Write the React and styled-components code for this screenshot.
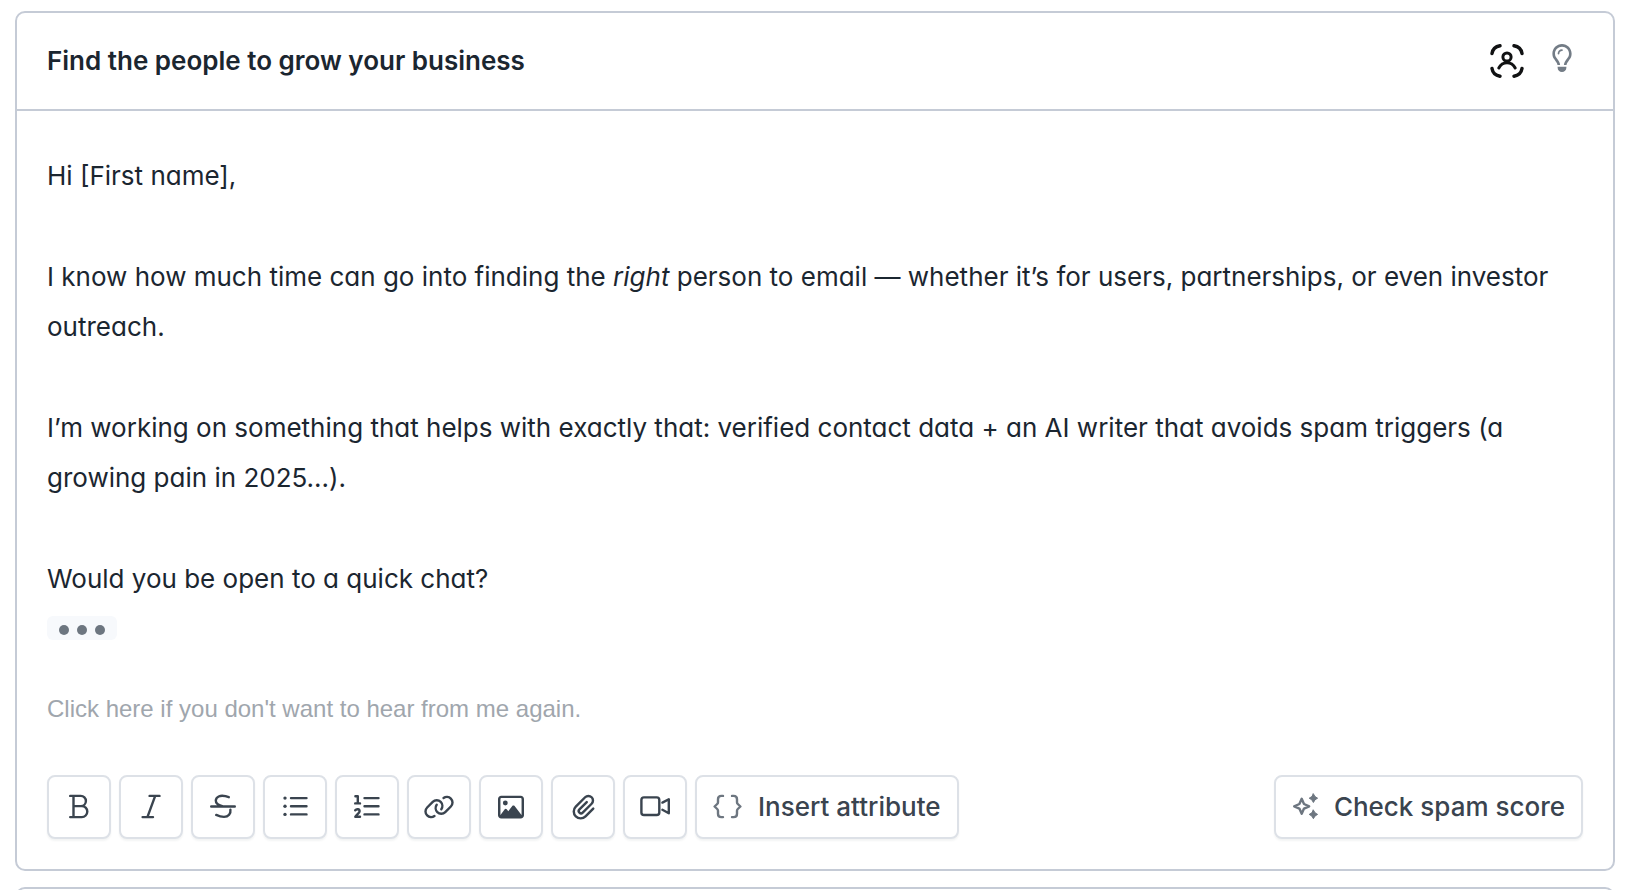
import React from "react";
import styled, { createGlobalStyle } from "styled-components";
import { FaRegImage, FaRegLightbulb } from "react-icons/fa6";

const GlobalStyle = createGlobalStyle`
  *, *::before, *::after { box-sizing: border-box; }
  body {
    margin: 0;
    background: #fff;
    color: #1b2630;
    font-family: Inter, "Liberation Sans", sans-serif;
    font-size: 26px;
  }
`;

const Page = styled.main`
  display: flex;
  flex-direction: column;
  gap: 16px;
  height: 100vh;
  overflow: hidden;
  padding: 11px 15px 0;
`;

const Card = styled.section`
  flex: none;
  border: 2px solid #c5cbd6;
  border-radius: 10px;
  background: #fff;
  min-height: 64px;
`;

const CardHeader = styled.header`
  display: flex;
  align-items: center;
  justify-content: space-between;
  height: 98px;
  padding: 0 37px 0 30px;
  border-bottom: 2px solid #c5cbd6;
`;

const Subject = styled.h1`
  margin: 0;
  font-size: 26px;
  font-weight: 600;
  line-height: 32px;
`;

const HeaderActions = styled.div`
  display: flex;
  align-items: flex-start;
  gap: 24px;
`;

const PlainButton = styled.button`
  display: flex;
  padding: 0;
  border: 0;
  background: none;
  color: ${(p) => p.$color};
  cursor: pointer;
`;

const Message = styled.div`
  display: flex;
  flex-direction: column;
  align-items: flex-start;
  padding: 40px 30px 0;
`;

const Paragraphs = styled.div`
  display: flex;
  flex-direction: column;
  gap: 51px;
  font-feature-settings: "cv11";
  line-height: 50px;

  p { margin: 0; }
`;

const MoreButton = styled.button`
  display: flex;
  align-items: center;
  justify-content: center;
  gap: 8px;
  width: 70px;
  height: 24px;
  margin-top: 12px;
  padding: 4px 0 0;
  border: 0;
  border-radius: 6px;
  background: #f7f9fc;
  cursor: pointer;
`;

const Dot = styled.span`
  width: 10px;
  height: 10px;
  border-radius: 50%;
  background: #6d7680;
`;

const Unsubscribe = styled.a`
  margin-top: 54px;
  color: #a0a6ad;
  font-family: "Liberation Sans", Arial, sans-serif;
  font-size: 24px;
  line-height: 30px;
  text-decoration: none;
`;

const Toolbar = styled.div`
  display: flex;
  gap: 8px;
  padding: 51px 30px 30px;
`;

const ToolButton = styled.button`
  display: flex;
  align-items: center;
  justify-content: center;
  gap: 16px;
  height: 64px;
  min-width: 64px;
  padding: 0 ${(p) => (p.$labelled ? 16 : 0)}px;
  margin-left: ${(p) => (p.$end ? "auto" : 0)};
  border: 2px solid #dde1e7;
  border-radius: 8px;
  background: #fff;
  box-shadow: 0 2px 2px rgba(27, 37, 48, 0.05);
  color: #3a444f;
  font: 500 26px/32px Inter, "Liberation Sans", sans-serif;
  white-space: nowrap;
  cursor: pointer;

  svg { flex: none; color: ${(p) => (p.$labelled ? "#6d7680" : "#3a444f")}; }
`;

const Icon = ({ w = 32, h = 32, box, sw = 2.4, children }) => (
  <svg
    width={w}
    height={h}
    viewBox={box || `0 0 ${w} ${h}`}
    fill="none"
    stroke="currentColor"
    strokeWidth={sw}
    strokeLinecap="round"
    strokeLinejoin="round"
    aria-hidden="true"
  >
    {children}
  </svg>
);

const ScanUserIcon = () => (
  <Icon w={34} h={34} sw={3.4}>
    <path d="M2 9.5Q3 3 10 1.8M24 1.8Q31 3 32 9.5M32 24.5Q31 31 24 32.2M10 32.2Q3 31 2 24.5" />
    <g strokeWidth="3">
      <circle cx="17" cy="13" r="4.1" />
      <path d="M8.8 24Q11.5 18.8 17 18.8T25.2 24" />
    </g>
  </Icon>
);

const BoldIcon = () => (
  <Icon>
    <path d="M7.2 4.9H17.8a5.1 5.1 0 0 1 0 10.2H10.5M17.8 15.1H18.8a5.5 5.5 0 0 1 0 11H7.2M10.5 4.9V26.1" />
  </Icon>
);

const ItalicIcon = () => (
  <Icon>
    <path d="M14.6 4.9H24.5M7.6 26.1H18M20.2 4.9L12.4 26.1" />
  </Icon>
);

const StrikeIcon = () => (
  <Icon>
    <path d="M4.2 15.5H27.8M21.8 6.2L18.5 5.2C13 3.7 9 6 8.8 9.4C8.6 13 12 14.4 16 15.4M23.4 18.8C24 22.5 21.5 25.9 17 25.9C14 25.9 11.5 25 9.2 23.9" />
  </Icon>
);

const ListLines = ({ x }) => <path d={`M${x} 7.1H27.5M${x} 15.2H27.5M${x} 23.4H27.5`} />;

const BulletsIcon = () => (
  <Icon>
    <ListLines x={12} />
    <g fill="currentColor" stroke="none">
      <circle cx="6" cy="7.1" r="1.7" />
      <circle cx="6" cy="15.2" r="1.7" />
      <circle cx="6" cy="23.4" r="1.7" />
    </g>
  </Icon>
);

const NumbersIcon = () => (
  <Icon>
    <ListLines x={13.5} />
    <path d="M4.4 5.2H6.8V12.3M4.2 12.4H9M4.2 19.3C5.5 17.6 8.6 17.8 8.6 20.2C8.6 21.8 6.4 23 4.3 25.7H9" />
  </Icon>
);

const LinkHook = "M411 75c45-32 107-27 146 12c44 44 44 115 0 159L445 357c-44 44-115 44-159 0c-39-39-44-101-12-146";
const LinkIcon = () => (
  <Icon w={32} h={26} box="0 0 640 512" sw={48}>
    <path d={LinkHook} />
    <path d={LinkHook} transform="rotate(180 320 256)" />
  </Icon>
);

const PaperclipIcon = () => (
  <Icon w={23} h={26} box="0 0 448 512" sw={48}>
    <path d="M416 288L264 440c-53 53-139 53-192 0s-53-139 0-192L256 64c35-35 93-35 128 0s35 93 0 128L208 368c-18 18-46 18-64 0s-18-46 0-64L288 160" />
  </Icon>
);

const VideoIcon = () => (
  <Icon>
    <rect x="2.4" y="6.4" width="17.9" height="17.6" rx="2.6" />
    <path d="M23.4 11.6L29.8 8.2V22.2L23.4 18.8" />
  </Icon>
);

const BracesIcon = () => (
  <Icon w={29}>
    <path d="M10 4.9H8.4Q5 4.9 5 8.3V11.2Q5 12.2 4.2 13L1.6 15.5L4.2 18Q5 18.8 5 19.8V22.7Q5 26.1 8.4 26.1H10M19 4.9H20.6Q24 4.9 24 8.3V11.2Q24 12.2 24.8 13L27.4 15.5L24.8 18Q24 18.8 24 19.8V22.7Q24 26.1 20.6 26.1H19" />
  </Icon>
);

const SparklesIcon = () => (
  <Icon w={26}>
    <path d="M9.7 7.8L12 13L17.2 15.3L12 17.6L9.7 22.8L7.4 17.6L2.2 15.3L7.4 13Z" />
    <g fill="currentColor" strokeWidth="1">
      <path d="M21.4 2.9L23 5.6L25.6 7.2L23 8.8L21.4 11.5L19.8 8.8L17.2 7.2L19.8 5.6Z" />
      <path d="M21.4 19.1L23 21.8L25.6 23.4L23 25L21.4 27.7L19.8 25L17.2 23.4L19.8 21.8Z" />
    </g>
  </Icon>
);

const tools = [
  { label: "Bold", icon: <BoldIcon /> },
  { label: "Italic", icon: <ItalicIcon /> },
  { label: "Strikethrough", icon: <StrikeIcon /> },
  { label: "Bulleted list", icon: <BulletsIcon /> },
  { label: "Numbered list", icon: <NumbersIcon /> },
  { label: "Link", icon: <LinkIcon /> },
  { label: "Image", icon: <FaRegImage size={26} aria-hidden="true" /> },
  { label: "Attachment", icon: <PaperclipIcon /> },
  { label: "Video", icon: <VideoIcon /> },
];

export default function App() {
  return (
    <>
      <GlobalStyle />
      <Page>
        <Card>
          <CardHeader>
            <Subject>Find the people to grow your business</Subject>
            <HeaderActions>
              <PlainButton type="button" aria-label="Preview contact" $color="#111213">
                <ScanUserIcon />
              </PlainButton>
              <PlainButton type="button" aria-label="Tips" $color="#737c86">
                <FaRegLightbulb size={28} aria-hidden="true" />
              </PlainButton>
            </HeaderActions>
          </CardHeader>
          <Message>
            <Paragraphs>
              <p>Hi [First name],</p>
              <p>
                I know how much time can go into finding the <em>right</em> person to email — whether it’s for
                users, partnerships, or even investor outreach.
              </p>
              <p>
                I’m working on something that helps with exactly that: verified contact data + an AI writer that
                avoids spam triggers (a growing pain in 2025...).
              </p>
              <p>Would you be open to a quick chat?</p>
            </Paragraphs>
            <MoreButton type="button" aria-label="Show more">
              <Dot />
              <Dot />
              <Dot />
            </MoreButton>
            <Unsubscribe href="#unsubscribe">Click here if you don't want to hear from me again.</Unsubscribe>
          </Message>
          <Toolbar>
            {tools.map((tool) => (
              <ToolButton key={tool.label} type="button" aria-label={tool.label}>
                {tool.icon}
              </ToolButton>
            ))}
            <ToolButton type="button" $labelled>
              <BracesIcon />
              Insert attribute
            </ToolButton>
            <ToolButton type="button" $labelled $end>
              <SparklesIcon />
              Check spam score
            </ToolButton>
          </Toolbar>
        </Card>
        <Card />
      </Page>
    </>
  );
}
